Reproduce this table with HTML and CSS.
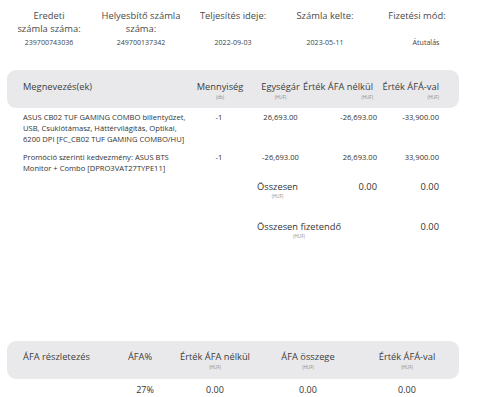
FILE: index.html
```html
<!DOCTYPE html>
<html lang="hu">
<head>
<meta charset="utf-8">
<title>Számla</title>
<link rel="stylesheet" href="styles.css">
</head>
<body>
<div class="page">
  <div class="meta">
    <div class="meta-label">Eredeti<br>számla száma:</div>
    <div class="meta-label">Helyesbítő számla<br>száma:</div>
    <div class="meta-label">Teljesítés ideje:</div>
    <div class="meta-label">Számla kelte:</div>
    <div class="meta-label">Fizetési mód:</div>
    <div class="meta-value">239700743036</div>
    <div class="meta-value">249700137342</div>
    <div class="meta-value">2022-09-03</div>
    <div class="meta-value">2023-05-11</div>
    <div class="meta-value meta-shift">Átutalás</div>
  </div>

  <div class="items">
    <div class="items-head">
      <div class="h-cell h-desc"><span class="h-label">Megnevezés(ek)</span></div>
      <div class="h-cell h-center h-qty"><span class="h-label">Mennyiség</span><span class="h-sub">(db)</span></div>
      <div class="h-cell h-center h-unit"><span class="h-label">Egységár</span><span class="h-sub">(HUF)</span></div>
      <div class="h-cell h-right h-net"><span class="h-label">Érték ÁFA nélkül</span><span class="h-sub">(HUF)</span></div>
      <div class="h-cell h-right"><span class="h-label">Érték ÁFÁ-val</span><span class="h-sub">(HUF)</span></div>
    </div>

    <div class="item-row">
      <div class="c-desc">ASUS CB02 TUF GAMING COMBO billentyűzet,<br>USB, Csuklótámasz, Háttérvilágítás, Optikai,<br>6200 DPI [FC_CB02 TUF GAMING COMBO/HU]</div>
      <div class="c-qty">-1</div>
      <div class="c-unit">26,693.00</div>
      <div class="c-net">-26,693.00</div>
      <div class="c-gross">-33,900.00</div>
    </div>
    <div class="item-row">
      <div class="c-desc">Promóció szerinti kedvezmény: ASUS BTS<br>Monitor + Combo [DPRO3VAT27TYPE11]</div>
      <div class="c-qty">-1</div>
      <div class="c-unit">-26,693.00</div>
      <div class="c-net">26,693.00</div>
      <div class="c-gross">33,900.00</div>
    </div>

    <div class="total-row">
      <div class="t-label"><span class="t-text">Összesen</span><span class="t-sub">(HUF)</span></div>
      <div class="t-net">0.00</div>
      <div class="t-gross">0.00</div>
    </div>
    <div class="total-row total-pay">
      <div class="t-label t-wide"><span class="t-text">Összesen fizetendő</span><span class="t-sub">(HUF)</span></div>
      <div class="t-gross">0.00</div>
    </div>
  </div>

  <div class="vat">
    <div class="vat-head">
      <div class="v-cell v-desc"><span class="h-label">ÁFA részletezés</span></div>
      <div class="v-cell"><span class="h-label">ÁFA%</span></div>
      <div class="v-cell"><span class="h-label">Érték ÁFA nélkül</span><span class="h-sub">(HUF)</span></div>
      <div class="v-cell"><span class="h-label">ÁFA összege</span><span class="h-sub">(HUF)</span></div>
      <div class="v-cell"><span class="h-label">Érték ÁFÁ-val</span><span class="h-sub">(HUF)</span></div>
    </div>
    <div class="vat-row">
      <div class="v-val v-desc"></div>
      <div class="v-val v-pct">27%</div>
      <div class="v-val">0.00</div>
      <div class="v-val">0.00</div>
      <div class="v-val">0.00</div>
    </div>
  </div>
</div>
</body>
</html>
```

FILE: styles.css
```css
* { box-sizing: border-box; }

html, body {
  margin: 0;
  padding: 0;
  background: #ffffff;
}

body {
  font-family: "Open Sans", "Noto Sans", "DejaVu Sans", sans-serif;
  color: #333333;
  width: 480px;
  height: 397px;
  overflow: hidden;
}

.page {
  padding-top: 9px;
}

/* ---------- meta header ---------- */
.meta {
  display: grid;
  grid-template-columns: repeat(5, 92px);
  margin-left: 3px;
}

.meta-label {
  text-align: center;
  font-size: 9.4px;
  line-height: 13px;
  color: #4a4a4a;
}

.meta-value {
  text-align: center;
  font-size: 7.1px;
  line-height: 14px;
  color: #444444;
}

.meta-shift {
  padding-left: 18px;
}

/* ---------- items table ---------- */
.items {
  margin: 21px 0 0 7px;
  width: 452px;
}

.items-head {
  display: grid;
  grid-template-columns: 169px 54px 61px 70px 62px;
  padding: 10px 20px 7px 16px;
  background: #e9e9eb;
  border-radius: 9px;
  height: 38px;
}

.h-cell {
  display: flex;
  flex-direction: column;
  white-space: nowrap;
}

.h-center { align-items: center; }
.h-qty { padding-left: 2px; }
.h-unit { padding-left: 8px; }
.h-right { align-items: flex-end; }
.h-net { padding-right: 4px; }

.h-label {
  font-size: 9.3px;
  line-height: 14px;
  color: #3d3d3d;
}

.h-sub {
  font-size: 4.5px;
  line-height: 7px;
  color: #8a8a8a;
}

.item-row {
  display: grid;
  grid-template-columns: 169px 54px 61px 70px 62px;
  padding: 0 20px 0 16px;
  margin-top: 7px;
  font-size: 7.6px;
  line-height: 11px;
  color: #333333;
}

.items-head + .item-row { margin-top: 4px; }

.c-desc { white-space: nowrap; }
.c-qty { text-align: center; }
.c-unit { text-align: center; padding-left: 8px; }
.c-net { text-align: right; }
.c-gross { text-align: right; }

.total-row {
  display: grid;
  grid-template-columns: 169px 54px 61px 70px 62px;
  padding: 0 20px 0 16px;
  margin-top: 7px;
}

.total-pay { margin-top: 21px; }

.t-label {
  grid-column: 3 / 4;
  padding-left: 11px;
  display: grid;
  justify-items: center;
  justify-content: start;
  white-space: nowrap;
}

.t-wide { grid-column: 3 / 5; }

.t-text {
  font-size: 9.3px;
  line-height: 12px;
  color: #333333;
}

.t-sub {
  font-size: 4.5px;
  line-height: 7px;
  color: #8a8a8a;
}

.t-net,
.t-gross {
  text-align: right;
  font-size: 9.3px;
  line-height: 12px;
  color: #333333;
}

.t-net { grid-column: 4 / 5; }
.t-gross { grid-column: 5 / 6; }

/* ---------- VAT table ---------- */
.vat {
  margin: 101px 0 0 7px;
  width: 452px;
}

.vat-head {
  display: grid;
  grid-template-columns: 82px 70px 80px 106px 92px;
  padding: 9px 6px 7px 16px;
  background: #e9e9eb;
  border-radius: 9px;
  height: 38px;
}

.v-cell {
  display: flex;
  flex-direction: column;
  align-items: center;
  white-space: nowrap;
}

.v-cell.v-desc { align-items: flex-start; }

.vat-row {
  display: grid;
  grid-template-columns: 82px 70px 80px 106px 92px;
  padding: 5px 6px 0 16px;
}

.v-val {
  text-align: center;
  font-size: 9px;
  line-height: 12px;
  color: #333333;
}

.v-pct { padding-left: 10px; }
```
